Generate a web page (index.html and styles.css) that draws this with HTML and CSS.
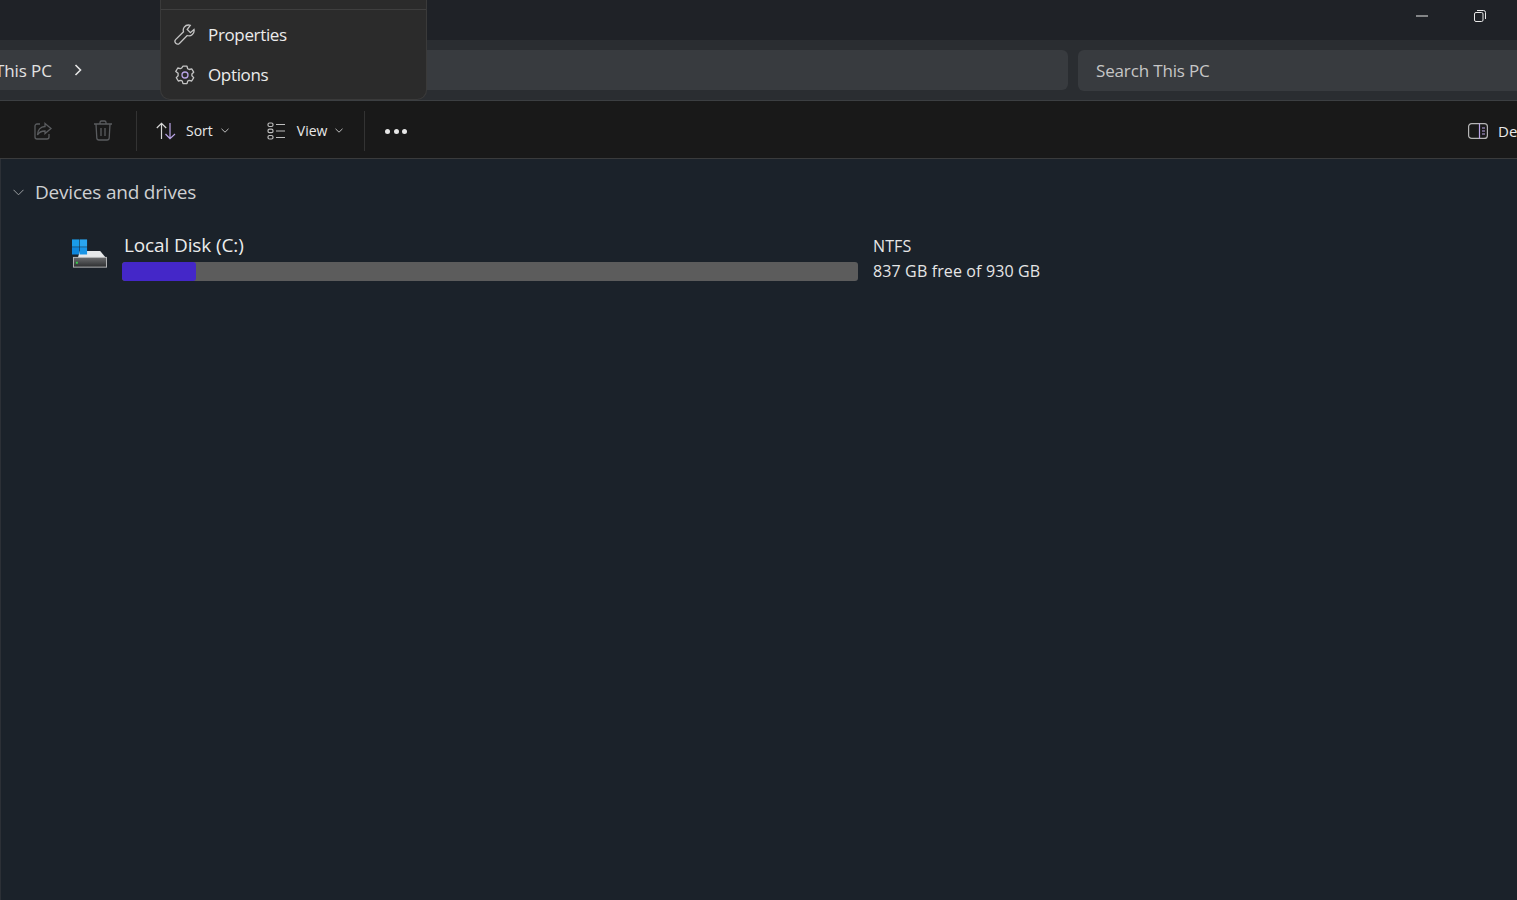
FILE: index.html
```html
<!DOCTYPE html>
<html lang="en">
<head>
<meta charset="utf-8">
<title>This PC</title>
<link rel="stylesheet" href="styles.css">
</head>
<body>
<div class="window">
  <header class="titlebar">
    <button class="winbtn min" aria-label="Minimize"><svg width="12" height="12" viewBox="0 0 12 12"><path d="M0 6h12" stroke="#e8e8e8" stroke-width="1"/></svg></button>
    <button class="winbtn max" aria-label="Restore"><svg width="12" height="12" viewBox="0 0 12 12" fill="none" stroke="#e8e8e8" stroke-width="1"><rect x="0.5" y="2.5" width="8.5" height="9" rx="1.5"/><path d="M3 .5h6.5a2 2 0 0 1 2 2V9"/></svg></button>
  </header>
  <div class="addressrow">
    <div class="address"><span class="crumb">This PC</span><svg class="crumb-arrow" width="10" height="14" viewBox="0 0 10 14" fill="none" stroke="#e6e6e6" stroke-width="1.6"><path d="M2.500 2l5 5-5 5"/></svg></div>
    <div class="search">Search This PC</div>
  </div>
  <nav class="toolbar">
    <div class="tool-group first">
      <svg class="tool-icon" width="20" height="20" viewBox="0 0 20 20" fill="none" stroke="#5a5c5f" stroke-width="1.3"><path d="M7 3H4a2 2 0 0 0-2 2v11a2 2 0 0 0 2 2h10a2 2 0 0 0 2-2v-3"/><path d="M12 2.500l6 5-6 5V10c-4 0-6 1-7.500 4 0-5 3-8.500 7.500-8.500z"/></svg>
      <svg class="tool-icon" width="20" height="21" viewBox="0 0 20 21" fill="none" stroke="#5a5c5f" stroke-width="1.3"><path d="M1 4h18M7 4V2.500A1.500 1.500 0 0 1 8.500 1h3A1.500 1.500 0 0 1 13 2.500V4M3 4l.8 14a2.200 2.200 0 0 0 2.200 2h8a2.200 2.200 0 0 0 2.200-2L17 4M8 8v8M12 8v8"/></svg>
    </div>
    <div class="sep"></div>
    <div class="tool-btn sort">
      <svg width="20" height="18" viewBox="0 0 20 18" fill="none" stroke-width="1.2"><path d="M5.500 17V1.500M.8 6l4.700-4.700L10.200 6" stroke="#d8d8d8"/><path d="M14 1v15.500M9.500 12l4.500 4.700L19 12" stroke="#b9a4e6"/></svg>
      <span>Sort</span>
      <svg class="caret" width="8" height="5" viewBox="0 0 8 5" fill="none" stroke="#bdbdbd"><path d="M.5.800L4 4.200 7.500.800"/></svg>
    </div>
    <div class="tool-btn view">
      <svg width="19" height="18" viewBox="0 0 19 18" fill="none" stroke="#bdbdbd" stroke-width="1.2"><rect x="1" y="1" width="5" height="3.500" rx="1.500"/><rect x="1" y="7.200" width="5" height="3.500" rx="1.500"/><rect x="1" y="13.500" width="5" height="3.500" rx="1.500"/><path d="M9 2.500h9M9 9h9M9 15.500h9"/></svg>
      <span>View</span>
      <svg class="caret" width="8" height="5" viewBox="0 0 8 5" fill="none" stroke="#bdbdbd"><path d="M.5.800L4 4.200 7.500.800"/></svg>
    </div>
    <div class="sep"></div>
    <div class="more" aria-label="More"><i></i><i></i><i></i></div>
    <div class="details">
      <svg width="20" height="16" viewBox="0 0 20 16" fill="none" stroke-width="1.2"><rect x=".6" y=".6" width="18.800" height="14.800" rx="3" stroke="#b5b5b5"/><path d="M11.500.6v14.800M14 5h3M14 8h3M14 11h3" stroke="#b9a4e6"/></svg>
      <span>Details</span>
    </div>
  </nav>
  <main class="content">
    <div class="group-head">
      <svg width="11" height="7" viewBox="0 0 11 7" fill="none" stroke="#9a9da1"><path d="M.5.800L5.500 5.800 10.500.800"/></svg>
      <span>Devices and drives</span>
    </div>
    <div class="drive">
      <svg class="drive-icon" width="35" height="30" viewBox="0 0 36 30">
        <path d="M6 19l2-7h21l6 7z" fill="#e6e8ea"/>
        <rect x="1.500" y="18.500" width="34" height="10" fill="url(#d)" stroke="#b4b6b8"/>
        <rect x="4" y="23" width="2" height="2" fill="#37d24a"/>
        <defs><linearGradient id="d" x1="0" y1="0" x2="0" y2="1"><stop offset="0" stop-color="#6b6d6f"/><stop offset="1" stop-color="#2c2d2f"/></linearGradient></defs>
        <rect x="0" y="0" width="7.500" height="7.500" fill="#1a9be8"/><rect x="8" y="0" width="7.500" height="7.500" fill="#2aa5ef"/><rect x="0" y="8" width="7.500" height="7.500" fill="#0f86dc"/><rect x="8" y="8" width="7.500" height="7.500" fill="#1a95e6"/>
      </svg>
      <div class="drive-main">
        <div class="drive-name">Local Disk (C:)</div>
        <div class="bar"><div class="bar-fill" style="width:10%"></div></div>
      </div>
      <div class="drive-meta">
        <div>NTFS</div>
        <div>837 GB free of 930 GB</div>
      </div>
    </div>
  </main>
  <div class="menu">
    <div class="menu-rule"></div>
    <div class="menu-item">
      <svg width="21" height="21" viewBox="0 0 21 21" fill="none" stroke="#c4c4c4" stroke-width="1.300"><path d="M14.500 1a5.200 5.200 0 0 0-5 6.800L1.600 15.600a2.700 2.700 0 0 0 3.800 3.800l7.800-7.900A5.200 5.200 0 0 0 20 5.500l-3.600 3.200-3.200-3.200L16.300 1.300A5 5 0 0 0 14.500 1z"/></svg>
      <span>Properties</span>
    </div>
    <div class="menu-item gear">
      <svg width="20" height="20" viewBox="0 0 20 20" fill="none" stroke-width="1.300"><path stroke="#c4c4c4" d="M8 1.200h4l.7 2.500 1.500.8 2.500-.7 2 3.400-1.800 1.800v1.800l1.800 1.800-2 3.400-2.500-.7-1.500.8-.7 2.500H8l-.7-2.500-1.500-.8-2.500.7-2-3.400 1.800-1.800V8.200L.8 6.400l2-3.400 2.500.7 1.500-.8z" stroke-linejoin="round"/><circle cx="10" cy="10" r="3" stroke="#b9a4e6"/></svg>
      <span>Options</span>
    </div>
  </div>
</div>
</body>
</html>
```
FILE: styles.css
```css
* { box-sizing: border-box; }
html, body { margin: 0; height: 100%; background: #1b222a; }
body { font-family: "Open Sans", "Noto Sans", "Liberation Sans", sans-serif; color: #e8e8e8; overflow: hidden; }
.window { position: relative; width: 1517px; height: 900px; overflow: hidden; display: flex; flex-direction: column; }

.titlebar { flex: 0 0 40px; background: #1f2227; display: flex; justify-content: flex-end; align-items: flex-start; padding: 10px 31px 0 0; gap: 46px; }
.winbtn { width: 12px; height: 12px; padding: 0; border: 0; background: none; display: block; }
.winbtn svg { display: block; }

.addressrow { flex: 0 0 61px; background: #2a2d31; border-bottom: 1px solid #3c3f42; display: flex; align-items: flex-start; padding-top: 10px; gap: 10px; }
.address { flex: 0 0 1068px; height: 40px; background: #383b3f; border-radius: 0 6px 6px 0; display: flex; align-items: center; font-size: 17px; color: #e2e2e2; }
.crumb { margin-left: -5px; letter-spacing: -0.1px; }
.crumb-arrow { margin-left: 21px; }
.search { flex: 0 0 460px; height: 41px; background: #383b3f; border-radius: 6px; display: flex; align-items: center; padding-left: 18px; font-size: 17px; color: #c6c6c6; letter-spacing: -0.15px; }

.toolbar { flex: 0 0 58px; background: #191919; border-bottom: 1px solid #3a3b3c; display: flex; align-items: center; font-size: 14px; color: #e8e8e8; padding-top: 2px; }
.tool-group.first { display: flex; gap: 40px; margin-left: 33px; align-items: center; }
.tool-group svg { display: block; }
.sep { width: 1px; height: 40px; background: #333; }
.tool-group.first + .sep { margin-left: 23px; }
.tool-btn { display: flex; align-items: center; }
.sort { margin-left: 19px; }
.sort span { margin-left: 10px; }
.view { margin-left: 38px; }
.view span { margin-left: 11px; }
.caret { flex: none; margin-left: 8px; }
.view + .sep { margin-left: 21px; }
.more { margin-left: 20px; margin-top: 1px; display: flex; gap: 3.500px; }
.more i { width: 5px; height: 5px; border-radius: 50%; background: #e6e6e6; display: block; }
.details { margin-left: auto; margin-right: -19px; display: flex; align-items: center; width: 68px; flex: 0 0 68px; font-size: 15px; }
.details svg { flex: none; display: block; }
.details span { margin-left: 10px; }

.content { flex: 1; background: #1b222a; border-left: 1px solid #2c3036; }
.group-head { display: flex; align-items: center; margin: 19px 0 0 12px; height: 28px; font-size: 19px; color: #cfd0d2; letter-spacing: -0.2px; }
.group-head span { margin-left: 11px; }
.drive { display: flex; align-items: flex-start; margin: 27px 0 0 71px; }
.drive-icon { margin-top: 6px; display: block; flex: none; }
.drive-main { margin-left: 15px; width: 736px; }
.drive-name { font-size: 19px; line-height: 24px; letter-spacing: -0.12px; color: #ececec; margin-left: 2px; }
.bar { height: 19px; margin-top: 5px; background: #5c5c5c; border-radius: 3px; overflow: hidden; }
.bar-fill { height: 100%; background: #4427c8; border-radius: 3px; }
.drive-meta { margin-left: 15px; font-size: 16px; line-height: 25px; color: #e6e6e6; letter-spacing: 0.13px; margin-top: 1px; }

.menu { position: absolute; left: 160px; top: -1px; width: 267px; height: 101px; background: #2b2b2b; border: 1px solid #3a3a3a; border-top: 0; border-radius: 0 0 10px 10px; padding-top: 10px; }
.menu-rule { height: 1px; background: #3f3f3f; margin-bottom: 4px; }
.menu-item { height: 40px; display: flex; align-items: center; padding-left: 13px; font-size: 17px; color: #ececec; letter-spacing: -0.35px; }
.menu-item svg { flex: 0 0 auto; display: block; }
.menu-item svg + span { margin-left: 13px; }
.menu-item.gear { padding-left: 14px; }
.menu-item.gear svg { margin-top: 2px; }
```
